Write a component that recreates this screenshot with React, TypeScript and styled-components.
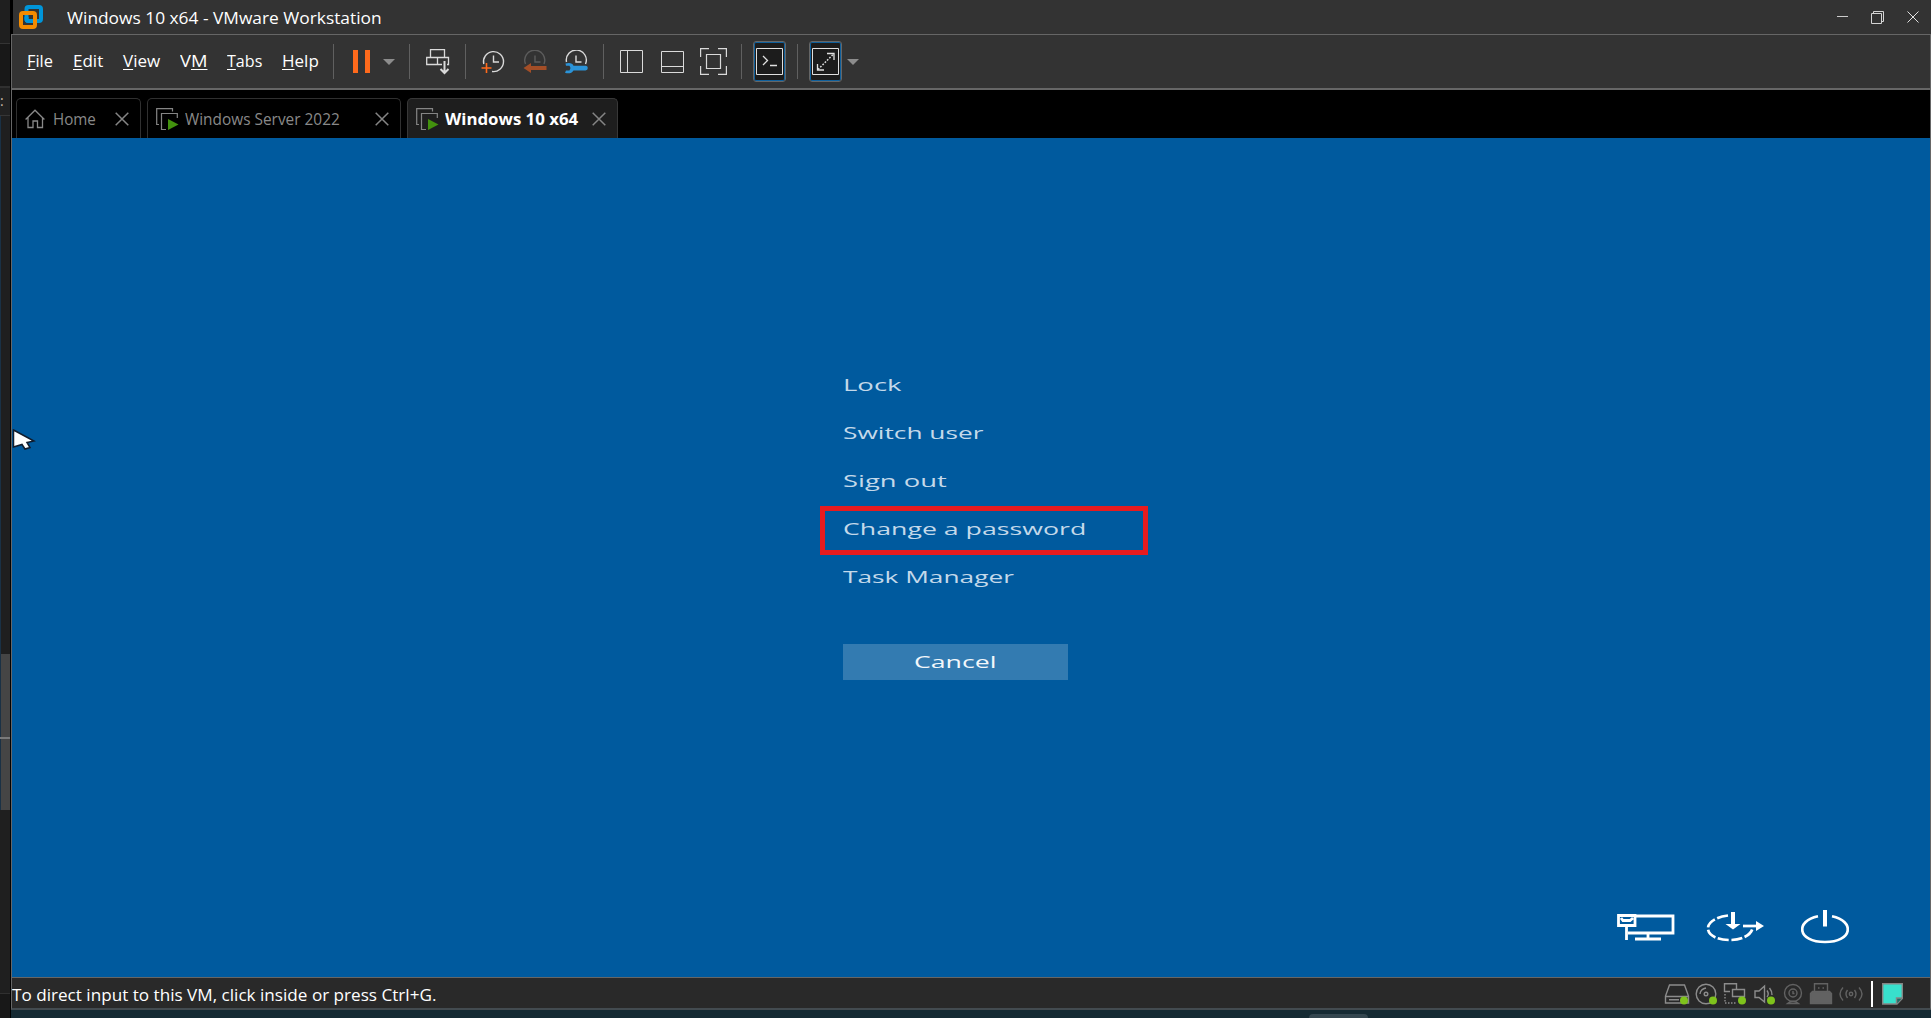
import React, { useLayoutEffect, useRef, useState } from "react";
import styled, { createGlobalStyle, css } from "styled-components";

const Global = createGlobalStyle`
  html, body { margin: 0; padding: 0; background: #1e1e1e; }
  body { overflow: hidden; font-family: "Open Sans", "Noto Sans", sans-serif; }
  svg { display: block; flex: none; }
`;

const Screen = styled.div`
  display: flex;
  width: 1931px;
  height: 1018px;
  overflow: hidden;
`;

/* ---------- strip of the window behind ---------- */
const Behind = styled.div`
  display: flex;
  flex-direction: column;
  flex: none;
  width: 10px;
  height: 1018px;
  background: #1f1f1f;
`;
const Slice = styled.div<{ $h: number; $bg: string; $edge?: boolean }>`
  box-sizing: border-box;
  flex: none;
  height: ${(p) => p.$h}px;
  background: ${(p) => p.$bg};
  ${(p) => p.$edge && css`border-left: 1px solid #1a3145;`}
  color: #c8b8a8;
  font-size: 14px;
  line-height: 26px;
`;

/* ---------- window frame ---------- */
const Column = styled.div`
  display: flex;
  flex-direction: column;
  flex: 1;
  min-width: 0;
  background: #000;
`;
const TitleBar = styled.header`
  box-sizing: border-box;
  display: flex;
  align-items: center;
  height: 34px;
  margin-left: 3px;
  padding: 0 12px 0 6px;
  background: #333;
  color: #fff;
  font-size: 17px;
`;
const TitleText = styled.div`
  flex: 1;
  margin-left: 24px;
  padding-top: 1px;
`;
const Controls = styled.div`
  display: flex;
  align-items: center;
  gap: 23px;
`;
const Frame = styled.div`
  box-sizing: border-box;
  display: flex;
  flex-direction: column;
  height: 976px;
  margin-left: 1px;
  border: 1px solid #666;
  border-bottom: 2px solid #434b50;
`;
const Toolbar = styled.nav`
  box-sizing: border-box;
  display: flex;
  align-items: center;
  flex: none;
  height: 55px;
  padding: 0 0 0 15px;
  border-bottom: 2px solid #666;
  background: #333;
  color: #fff;
  font-size: 17px;
`;
const Menu = styled.div`
  box-sizing: border-box;
  display: flex;
  gap: 20px;
  width: 306px;
  padding-bottom: 2px;
  flex: none;
  u { text-decoration-thickness: 1px; text-underline-offset: 2px; text-decoration-skip-ink: none; }
`;
const Separator = styled.div<{ $ml?: number }>`
  flex: none;
  width: 1px;
  height: 35px;
  margin-left: ${(p) => p.$ml ?? 0}px;
  background: #606060;
`;
const Tool = styled.div<{ $ml: number }>`
  flex: none;
  margin-left: ${(p) => p.$ml}px;
`;
const ActiveTool = styled(Tool)`
  box-sizing: border-box;
  display: flex;
  align-items: center;
  justify-content: center;
  width: 33px;
  height: 41px;
  border: 1px solid #666;
  border-radius: 3px;
  background: #1c1c1c;
  box-shadow: inset 0 0 0 1px #0f609c;
`;

/* ---------- tabs ---------- */
const TabStrip = styled.div`
  box-sizing: border-box;
  display: flex;
  align-items: flex-end;
  flex: none;
  height: 48px;
  padding-left: 4px;
  background: #000;
`;
const Tab = styled.div<{ $w: number; $mr: number; $active?: boolean }>`
  box-sizing: border-box;
  display: flex;
  align-items: center;
  width: ${(p) => p.$w}px;
  height: 40px;
  margin-right: ${(p) => p.$mr}px;
  padding: 1px 11px 0 8px;
  border: 1px solid ${(p) => (p.$active ? "#383838" : "#303030")};
  border-bottom: 0;
  border-radius: 5px 5px 0 0;
  background: ${(p) => (p.$active ? "#1e1e1e" : "#000")};
  color: ${(p) => (p.$active ? "#fff" : "#898989")};
  font-size: ${(p) => (p.$active ? 15.3 : 15.5)}px;
  font-weight: ${(p) => (p.$active ? 700 : 400)};
`;
const TabLabel = styled.div<{ $ml: number }>`
  flex: 1;
  margin-left: ${(p) => p.$ml}px;
`;

/* ---------- guest display ---------- */
const Guest = styled.main`
  position: relative;
  box-sizing: border-box;
  display: flex;
  flex-direction: column;
  flex: none;
  height: 839px;
  padding: 223px 70px 0 831px;
  background: #005a9e;
  color: #c4d9ea;
  font-size: 16.6px;
`;
const Option = styled.div<{ $marked?: boolean }>`
  position: relative;
  box-sizing: border-box;
  display: flex;
  align-items: center;
  height: 48px;
  padding-bottom: 2px;
  ${(p) =>
    p.$marked &&
    css`
      &::after {
        content: "";
        position: absolute;
        box-sizing: border-box;
        left: -23px;
        top: 1px;
        width: 328px;
        height: 49px;
        border: 5px solid #e81b1e;
      }
    `}
`;
const CancelButton = styled.button`
  display: flex;
  align-items: center;
  justify-content: center;
  width: 225px;
  height: 36px;
  margin: 43px 0 0;
  padding: 0 0 1px;
  border: 0;
  background: #337bb1;
  color: #f2f7fb;
  font: 500 16.4px "Open Sans", sans-serif;
  text-align: left;
`;
const GuestActions = styled.div`
  display: flex;
  align-items: center;
  margin: 230px 0 0 774px;
  svg + svg { margin-left: 31px; }
  svg:last-child { margin-left: 36px; }
`;
const Pointer = styled.div`
  position: absolute;
  left: 0;
  top: 291px;
`;

/* ---------- status bar ---------- */
const StatusBar = styled.footer`
  box-sizing: border-box;
  display: flex;
  align-items: center;
  flex: 1;
  padding: 1px 27px 0 0;
  border-top: 1px solid #666;
  background: #292929;
  color: #fff;
  font-size: 17px;
`;
const StatusText = styled.div`
  flex: 1;
  padding-top: 1px;
`;
const Divider = styled.div`
  width: 2px;
  height: 26px;
  margin: 0 9px 0 4px;
  background: #fff;
`;
const Devices = styled.div`
  display: flex;
  align-items: center;
`;
const Desktop = styled.div`
  display: flex;
  align-items: flex-end;
  flex: none;
  height: 8px;
  margin-left: 1px;
  padding-left: 1298px;
  background: #152a33;
`;
const DockHandle = styled.div`
  width: 59px;
  height: 4px;
  border-radius: 5px 5px 0 0;
  background: #34464f;
`;

/* Text stretched or condensed horizontally to a given width. */
const FitBox = styled.span<{ $w: number }>`
  display: inline-block;
  width: ${(p) => p.$w}px;
  white-space: nowrap;
  > span { display: inline-block; transform-origin: 0 50%; }
`;
function Fit({ w, children }: { w: number; children: React.ReactNode }) {
  const ref = useRef<HTMLSpanElement>(null);
  const [scale, setScale] = useState(1);
  useLayoutEffect(() => {
    if (ref.current) setScale(w / ref.current.offsetWidth);
  }, [w]);
  return (
    <FitBox $w={w}>
      <span ref={ref} style={{ transform: `scaleX(${scale})` }}>{children}</span>
    </FitBox>
  );
}

/* ---------- icons ---------- */
const Logo = () => (
  <svg width="24" height="24" viewBox="0 0 24 24" fill="none" strokeWidth="4">
    <rect x="7.500" y="2" width="14.500" height="14" rx="2" stroke="#0095d9" />
    <rect x="2" y="8" width="14" height="14" rx="2" stroke="#f38b00" />
    <path d="M7.500 12V14Q7.500 16 9.500 16H13" stroke="#0095d9" />
  </svg>
);
const Minimize = () => (
  <svg width="11" height="12" viewBox="0 0 11 12"><path d="M0 5.500H11" stroke="#ccc" /></svg>
);
const Restore = () => (
  <svg width="13" height="13" viewBox="0 0 13 13" fill="none" stroke="#d5d5d5">
    <path d="M2.500 2V.5H12.500V10.500H11M.5 2.500H10.500V12.500H.5Z" />
  </svg>
);
const Close = () => (
  <svg width="12" height="12" viewBox="0 0 12 12"><path d="M.5.500L11.500 11.500M11.500.500L.5 11.500" stroke="#e0e0e0" /></svg>
);
const TabClose = () => (
  <svg width="14" height="14" viewBox="0 0 14 14"><path d="M.7.700L13.300 13.300M13.300.700L.7 13.300" stroke="#858585" strokeWidth="1.500" /></svg>
);
const Caret = () => (
  <svg width="12" height="6" viewBox="0 0 12 6"><path d="M0 0H12L6 6Z" fill="#8c8c8c" /></svg>
);
const Pause = () => (
  <svg width="17" height="23" viewBox="0 0 17 23"><path d="M0 0H5V23H0ZM12 0H17V23H12Z" fill="#ff6a1c" /></svg>
);
const SendKeys = () => (
  <svg width="24" height="26" viewBox="0 0 24 26" fill="none" stroke="#dadada" strokeWidth="1.300">
    <path d="M4.500 8.500V.7H18.500V8.500M16 15.500H.7V8.500H22.500V15.500H21M11.500 8.500V15.500" />
    <path d="M18.500 12V24M14.500 20L18.500 24L22.500 20" strokeWidth="2" />
  </svg>
);
const SnapshotTake = () => (
  <svg width="24" height="24" viewBox="0 0 24 24" fill="none" stroke="#dadada" strokeWidth="1.400">
    <path d="M2.800 14A10 10 0 1 1 11 21.500M12.500 5.500V12H18" />
    <path d="M5.500 13V23M.5 18H10.500" stroke="#ff6a1c" strokeWidth="1.600" />
  </svg>
);
const SnapshotRevert = () => (
  <svg width="24" height="24" viewBox="0 0 24 24" fill="none" stroke="#5c5c5c" strokeWidth="1.400">
    <path d="M2.500 14A10 10 0 1 1 21 14M12 5.500V12H17.500" />
    <path d="M.5 18L8 13V16H23.500V20H8V23Z" fill="#a34e27" stroke="none" />
  </svg>
);
const SnapshotManage = () => (
  <svg width="24" height="24" viewBox="0 0 24 24" fill="none" stroke="#dadada" strokeWidth="1.400">
    <path d="M2.500 12A10 10 0 1 1 21.500 14M12 5.500V12H17.500" />
    <path d="M1.500 13.500Q8 12 9.500 15.800H21.500A2.300 2.300 0 0 1 21.500 20.400H9.500Q7 24.500 1 22.800L2 20.500H5.500L6.500 18L5.500 15.800H2Z" fill="#2b93d8" stroke="none" />
  </svg>
);
const Sidebar = () => (
  <svg width="23" height="23" viewBox="0 0 23 23" fill="none" stroke="#dadada">
    <path d="M.5.500H22.500V22.500H.5ZM7.500 0V23" />
  </svg>
);
const Thumbs = () => (
  <svg width="23" height="22" viewBox="0 0 23 22" fill="none" stroke="#dadada">
    <path d="M.5.500H22.500V21.500H.5ZM0 15.500H23" />
  </svg>
);
const FullScreen = () => (
  <svg width="27" height="27" viewBox="0 0 27 27" fill="none" stroke="#dadada" strokeWidth="1.200">
    <path d="M9 .6H.6V9M18 .6H26.400V9M.6 18V26.400H9M18 26.400H26.400V18M6.500 6.500H20.500V20.500H6.500Z" />
  </svg>
);
const Console = () => (
  <svg width="27" height="27" viewBox="0 0 27 27" fill="none" stroke="#e0e0e0">
    <path d="M.5.500H26.500V26.500H.5Z" />
    <path d="M7 8L11.500 12.500L7 17M14 17.500H21" strokeWidth="1.300" />
  </svg>
);
const Stretch = () => (
  <svg width="27" height="27" viewBox="0 0 27 27" fill="none" stroke="#e0e0e0">
    <path d="M.5.500H26.500V26.500H.5Z" />
    <path d="M15 5.500H22V12M5.500 16V22H12" strokeWidth="1.300" />
    <path d="M6 21.500L21.500 6" strokeWidth="1.500" strokeDasharray="1.700 1.500" />
  </svg>
);
const HomeIcon = () => (
  <svg width="20" height="20" viewBox="0 0 20 20" fill="none" stroke="#898989" strokeWidth="1.300">
    <path d="M.6 10.500L10 1.200L19.400 10.500M3 8.500V18.500H8V12H12.500V18.500H17.500V8.500" />
  </svg>
);
const VmIcon = () => (
  <svg width="23" height="23" viewBox="0 0 23 23" fill="none" stroke="#858585" strokeWidth="1.200">
    <path d="M3 16.500H.7V.7H16.500V3.500M10 21.500H5.500V5.500H21.300V10" />
    <path d="M12 11L22.500 16.500L12 22Z" fill="#43920e" stroke="none" />
  </svg>
);
const GuestNetwork = () => (
  <svg width="58" height="27" viewBox="0 0 58 27" fill="none" stroke="#fff" strokeWidth="2">
    <path d="M18 2H56V19H11" strokeWidth="2.800" />
    <path d="M1.500 1.500H18V11.500H1.500ZM4 4L6 6.500H13L16 4M9.500 11V26M31 19V24M18 25H44" strokeWidth="2.800" />
  </svg>
);
const EaseOfAccess = () => (
  <svg width="58" height="30" viewBox="0 0 58 30" fill="none" stroke="#fff" strokeWidth="2.700">
    <path d="M22 3.500C-6 7 -4 28 24 28C37 28 46 22 46.500 16" strokeDasharray="11 2.500" />
    <path d="M27 0V13" strokeWidth="4" />
    <path d="M19.500 12H34.500L27 17.500ZM50 9L58 14L50 19Z" fill="#fff" stroke="none" />
    <path d="M37 14H51" />
  </svg>
);
const Power = () => (
  <svg width="50" height="34" viewBox="0 0 50 34" fill="none" stroke="#fff" strokeWidth="2.700">
    <path d="M18 6.300C-5 11 -3 32 25 32C53 32 55 11 32 6.300" />
    <path d="M25 0V16.500" strokeWidth="4" />
  </svg>
);
const Arrow = () => (
  <svg width="24" height="22" viewBox="0 0 24 22">
    <path d="M1.500 1L22 12L15 13.500L18 18.500L13 20L10 15.500L1.500 18Z" fill="#fff" stroke="#111c2c" strokeWidth="1.500" />
  </svg>
);

const DeviceSvg = styled.svg<{ $dim?: boolean }>`
  fill: none;
  stroke: ${(p) => (p.$dim ? "#626262" : "#8c8c8c")};
  stroke-width: 1.4;
`;
const Live = () => <circle cx="20" cy="18.500" r="4" fill="#7fc31c" stroke="none" />;
const Dev = ({ dim, live, children }: { dim?: boolean; live?: boolean; children: React.ReactNode }) => (
  <DeviceSvg $dim={dim} width="29" height="24" viewBox="0 0 29 24">
    {children}
    {live && <Live />}
  </DeviceSvg>
);

const menus: [string, string, string, number][] = [
  ["", "F", "ile", 26],
  ["", "E", "dit", 30],
  ["", "V", "iew", 37],
  ["V", "M", "", 27],
  ["", "T", "abs", 35],
  ["", "H", "elp", 37],
];
const options: [string, number][] = [
  ["Lock", 58],
  ["Switch user", 141],
  ["Sign out", 104],
  ["Change a password", 243],
  ["Task Manager", 171],
];

export default function App() {
  return (
    <Screen>
      <Global />
      <Behind>
        <Slice $h={43} $bg="#1f1f1f" />
        <Slice $h={1} $bg="#343434" />
        <Slice $h={42} $bg="#181818" />
        <Slice $h={2} $bg="#303030" />
        <Slice $h={27} $bg="#212121">:</Slice>
        <Slice $h={1} $bg="#363636" />
        <Slice $h={538} $bg="#1f1f1f" $edge />
        <Slice $h={83} $bg="#454545" $edge />
        <Slice $h={2} $bg="#7a7a7a" />
        <Slice $h={71} $bg="#454545" $edge />
        <Slice $h={183} $bg="#1f1f1f" />
        <Slice $h={1} $bg="#303030" />
        <Slice $h={24} $bg="#181818" />
      </Behind>
      <Column>
        <TitleBar>
          <Logo />
          <TitleText><Fit w={315}>Windows 10 x64 - VMware Workstation</Fit></TitleText>
          <Controls><Minimize /><Restore /><Close /></Controls>
        </TitleBar>
        <Frame>
          <Toolbar>
            <Menu>
              {menus.map(([pre, key, rest, w]) => (
                <Fit key={key} w={w}>{pre}<u>{key}</u>{rest}</Fit>
              ))}
            </Menu>
            <Separator />
            <Tool $ml={19}><Pause /></Tool>
            <Tool $ml={13}><Caret /></Tool>
            <Separator $ml={14} />
            <Tool $ml={16}><SendKeys /></Tool>
            <Separator $ml={15} />
            <Tool $ml={15}><SnapshotTake /></Tool>
            <Tool $ml={18}><SnapshotRevert /></Tool>
            <Tool $ml={17}><SnapshotManage /></Tool>
            <Separator $ml={15} />
            <Tool $ml={16}><Sidebar /></Tool>
            <Tool $ml={18}><Thumbs /></Tool>
            <Tool $ml={16}><FullScreen /></Tool>
            <Separator $ml={14} />
            <ActiveTool $ml={11}><Console /></ActiveTool>
            <Separator $ml={11} />
            <ActiveTool $ml={11}><Stretch /></ActiveTool>
            <Tool $ml={5}><Caret /></Tool>
          </Toolbar>
          <TabStrip>
            <Tab $w={125} $mr={6}>
              <HomeIcon />
              <TabLabel $ml={8}><Fit w={43}>Home</Fit></TabLabel>
              <TabClose />
            </Tab>
            <Tab $w={254} $mr={6}>
              <VmIcon />
              <TabLabel $ml={6}><Fit w={155}>Windows Server 2022</Fit></TabLabel>
              <TabClose />
            </Tab>
            <Tab $w={211} $mr={0} $active>
              <VmIcon />
              <TabLabel $ml={6}><Fit w={133}>Windows 10 x64</Fit></TabLabel>
              <TabClose />
            </Tab>
          </TabStrip>
          <Guest>
            {options.map(([label, w]) => (
              <Option key={label} $marked={label === "Change a password"}>
                <Fit w={w}>{label}</Fit>
              </Option>
            ))}
            <CancelButton><Fit w={83}>Cancel</Fit></CancelButton>
            <GuestActions>
              <GuestNetwork /><EaseOfAccess /><Power />
            </GuestActions>
            <Pointer><Arrow /></Pointer>
          </Guest>
          <StatusBar>
            <StatusText><Fit w={424}>To direct input to this VM, click inside or press Ctrl+G.</Fit></StatusText>
            <Devices>
              <Dev live><path d="M5.500 3H20.500L24.500 14V21H1.500V14ZM1.500 14.500H24.500M5 17.700H15" /></Dev>
              <Dev live><circle cx="13" cy="12" r="9.800" /><circle cx="13" cy="12" r="1.800" /><path d="M7 12Q7.500 7 13 6" /></Dev>
              <Dev live>
                <path d="M8 9.500H2.500V1.700H14.500V7M10.500 7.500H22.500V14.500H10.500Z" />
                <path d="M3 12V21H15" strokeDasharray="1.500 1.500" />
              </Dev>
              <Dev live><path d="M4 9H8L13.500 4V20L8 15.500H4ZM16 8.500Q18.500 12 16 15M18.500 6Q21 9 21 13" /></Dev>
              <Dev dim><circle cx="13" cy="11" r="8.500" /><circle cx="13" cy="11" r="4" /><path d="M13 9V11.500H14.500M7.500 21.500Q13 17 18.500 21.500Z" /></Dev>
              <Dev dim><path d="M5.500 10V1.700H18.500V10M9 6H10.500M13.500 6H15" /><path d="M1.500 21.500V11.500L3.500 9.500H20.500L22.500 11.500V21.500Z" fill="#626262" /></Dev>
              <Dev dim><circle cx="13" cy="12" r="1.700" /><path d="M9.500 8Q6.500 12 9.500 16M16.500 8Q19.500 12 16.500 16M5 5.500Q-1 12 5 18.500M21 5.500Q27 12 21 18.500" /></Dev>
            </Devices>
            <Divider />
            <svg width="21" height="22" viewBox="0 0 21 22" stroke="#858585" strokeWidth="1.400">
              <path d="M.7.700H20.300V15.500L15 21H.7Z" fill="#38e0cc" />
              <path d="M14.500 21V15H20.300" fill="#1f6d66" />
            </svg>
          </StatusBar>
        </Frame>
        <Desktop><DockHandle /></Desktop>
      </Column>
    </Screen>
  );
}
